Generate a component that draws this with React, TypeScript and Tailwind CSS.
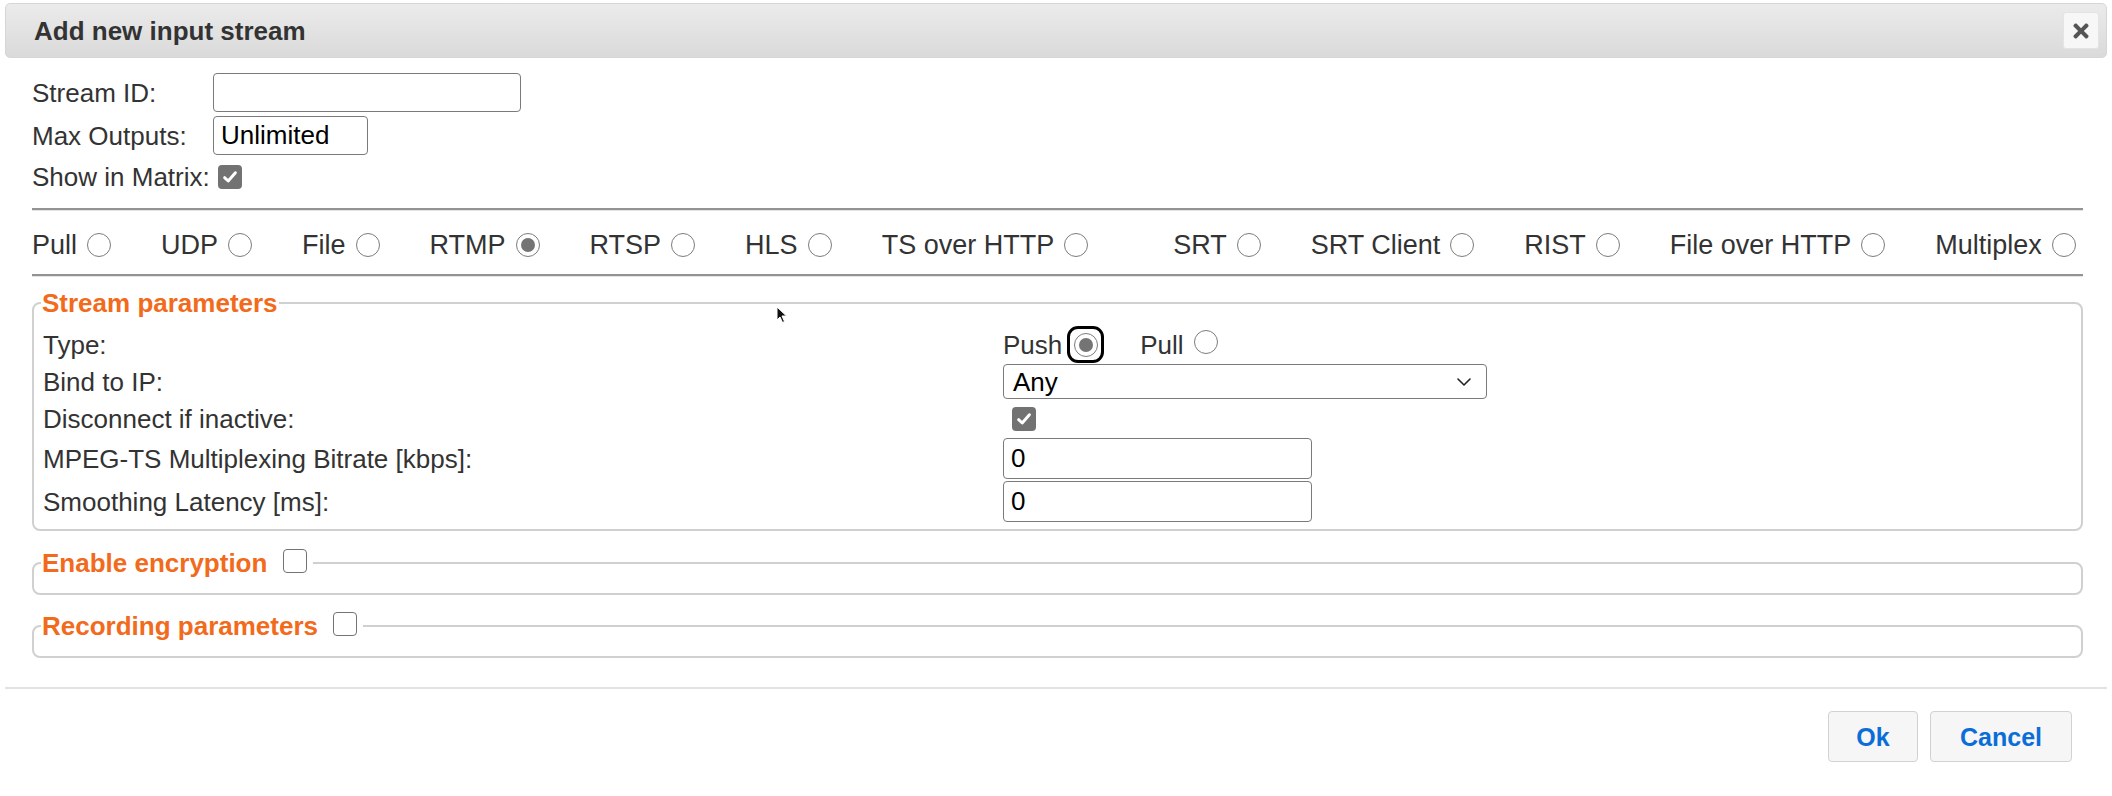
import React from 'react';
import { FaTimes } from 'react-icons/fa';
import { ChevronDown } from 'lucide-react';

/* ── Small form primitives (Safari-like look) ─────────────── */
const Radio: React.FC<{ checked?: boolean }> = ({ checked }) => (
  <span className="inline-flex h-[24px] w-[24px] shrink-0 items-center justify-center rounded-full border-[1.5px] border-[#7c7c7c] bg-white">
    {checked && <span className="h-[14px] w-[14px] rounded-full bg-[#747474]" />}
  </span>
);

const Checkbox: React.FC<{ checked?: boolean }> = ({ checked }) =>
  checked ? (
    <span className="inline-flex h-[24px] w-[24px] shrink-0 items-center justify-center rounded-[4px] bg-[#727272]">
      <svg width="18" height="18" viewBox="0 0 16 16" fill="none" aria-hidden="true">
        <path d="M3.2 8.6 L6.4 11.6 L12.8 4.2" stroke="#fff" strokeWidth="2.6" strokeLinecap="round" strokeLinejoin="round" />
      </svg>
    </span>
  ) : (
    <span className="inline-block h-[24px] w-[24px] shrink-0 rounded-[4px] border-[1.5px] border-[#737373] bg-white" />
  );

const HRule: React.FC = () => (
  <div className="h-[3px] border-t-2 border-b border-t-[#939393] border-b-[#e4e4e4]" />
);

const streamTypes: { label: string; checked?: boolean; extra?: boolean }[] = [
  { label: 'Pull' },
  { label: 'UDP' },
  { label: 'File' },
  { label: 'RTMP', checked: true },
  { label: 'RTSP' },
  { label: 'HLS' },
  { label: 'TS over HTTP' },
  { label: 'SRT', extra: true },
  { label: 'SRT Client' },
  { label: 'RIST' },
  { label: 'File over HTTP' },
  { label: 'Multiplex' },
];

const legendCls = "-ml-[2px] px-[1px] text-[26px] font-bold leading-[26px] text-[#f26a1b]";

export default function App() {
  return (
    <div className="relative flex h-[796px] w-[2112px] flex-col overflow-hidden bg-white font-['Liberation_Sans',Arial,sans-serif] text-[26px] leading-[30px] text-[#333]">

      {/* ── Title bar ─────────────────────────────────────── */}
      <div className="mx-[5px] mt-[3px] flex h-[55px] items-center justify-between rounded-[5px] border border-[#d6d6d6] bg-gradient-to-b from-[#ebebeb] to-[#dadada] pl-[28px] pr-[7px]">
        <span className="text-[26px] font-bold text-[#333]">Add new input stream</span>
        <button className="flex h-[37px] w-[36px] items-center justify-center rounded-[3px] border border-[#e4e4e4] bg-[#f7f7f7]">
          <FaTimes size={22} color="#555" />
        </button>
      </div>

      {/* ── Body ──────────────────────────────────────────── */}
      <div className="pl-[32px] pr-[29px]">
        <div className="mt-[15px] flex h-[39px] items-center">
          <span className="w-[181px]">Stream ID:</span>
          <input className="h-[39px] w-[308px] rounded-[4px] border-[1.5px] border-[#7a7a7a] px-[8px] text-black outline-none" />
        </div>
        <div className="mt-[4px] flex h-[39px] items-center">
          <span className="w-[181px]">Max Outputs:</span>
          <input
            defaultValue="Unlimited"
            className="h-[39px] w-[155px] rounded-[4px] border-[1.5px] border-[#7a7a7a] px-[7px] text-black outline-none"
          />
        </div>
        <div className="mt-[8px] flex h-[28px] items-center gap-[8px]">
          <span>Show in Matrix:</span>
          <Checkbox checked />
        </div>

        <div className="mt-[17px]"><HRule /></div>

        {/* Stream type radios */}
        <div className="flex h-[63px] items-center gap-[50px] whitespace-nowrap pt-[4px] text-[27px]">
          {streamTypes.map(t => (
            <div key={t.label} className={`flex shrink-0 items-center gap-[10px] ${t.extra ? 'ml-[35px]' : ''}`}>
              <span>{t.label}</span>
              <Radio checked={t.checked} />
            </div>
          ))}
        </div>

        <HRule />

        {/* Stream parameters */}
        <fieldset className="mt-[13px] rounded-[8px] border-2 border-[#d0d0d0] pb-[6px] pl-[9px] pr-[9px]">
          <legend className={legendCls}>Stream parameters</legend>
          <div className="mt-[10px] flex flex-col">
            <div className="flex h-[37px] items-center">
              <span className="w-[960px]">Type:</span>
              <div className="flex items-center">
                <span>Push</span>
                <span className="ml-[5px] flex h-[37px] w-[37px] items-center justify-center rounded-[11px] border-[3.5px] border-black">
                  <Radio checked />
                </span>
                <span className="ml-[36px]">Pull</span>
                <span className="ml-[10px]"><Radio /></span>
              </div>
            </div>
            <div className="flex h-[37px] items-center">
              <span className="w-[960px]">Bind to IP:</span>
              <div className="flex h-[35px] w-[484px] items-center justify-between rounded-[4px] border-[1.5px] border-[#7a7a7a] pl-[9px] pr-[10px] text-black">
                <span>Any</span>
                <ChevronDown size={24} strokeWidth={1.6} color="#222" />
              </div>
            </div>
            <div className="flex h-[37px] items-center">
              <span className="w-[960px]">Disconnect if inactive:</span>
              <span className="ml-[9px]"><Checkbox checked /></span>
            </div>
            <div className="flex h-[43px] items-center">
              <span className="w-[960px]">MPEG-TS Multiplexing Bitrate [kbps]:</span>
              <input defaultValue="0" className="h-[41px] w-[309px] rounded-[4px] border-[1.5px] border-[#7a7a7a] px-[7px] text-black outline-none" />
            </div>
            <div className="flex h-[43px] items-center">
              <span className="w-[960px]">Smoothing Latency [ms]:</span>
              <input defaultValue="0" className="h-[41px] w-[309px] rounded-[4px] border-[1.5px] border-[#7a7a7a] px-[7px] text-black outline-none" />
            </div>
          </div>
        </fieldset>

        {/* Enable encryption */}
        <fieldset className="mt-[18px] rounded-[8px] border-2 border-[#d0d0d0] pb-[16px] pl-[9px] pr-[9px]">
          <legend className={legendCls}>
            <span className="flex items-center pr-[5px]">
              Enable encryption
              <span className="ml-[16px]"><Checkbox /></span>
            </span>
          </legend>
        </fieldset>

        {/* Recording parameters */}
        <fieldset className="mt-[17px] rounded-[8px] border-2 border-[#d0d0d0] pb-[16px] pl-[9px] pr-[9px]">
          <legend className={legendCls}>
            <span className="flex items-center pr-[5px]">
              Recording parameters
              <span className="ml-[15px]"><Checkbox /></span>
            </span>
          </legend>
        </fieldset>
      </div>

      {/* ── Footer ────────────────────────────────────────── */}
      <div className="mx-[5px] mt-[29px] border-t-2 border-[#e2e2e2]" />
      <div className="mt-[22px] flex justify-end gap-[12px] pr-[40px]">
        <button className="h-[51px] w-[90px] rounded-[4px] border-[1.5px] border-[#d2d2d2] bg-[#f6f6f6] text-[25px] font-bold text-[#0b6ed8]">
          Ok
        </button>
        <button className="h-[51px] w-[142px] rounded-[4px] border-[1.5px] border-[#d2d2d2] bg-[#f6f6f6] text-[25px] font-bold text-[#0b6ed8]">
          Cancel
        </button>
      </div>

      {/* mouse pointer captured in the screenshot */}
      <svg className="absolute left-[776px] top-[306px]" width="12" height="18" viewBox="0 0 12 18" aria-hidden="true">
        <path d="M1 1 L1 14 L4 11 L6.5 16.5 L8.5 15.5 L6 10 L10.5 10 Z" fill="#111" stroke="#fff" strokeWidth="1" />
      </svg>
    </div>
  );
}
